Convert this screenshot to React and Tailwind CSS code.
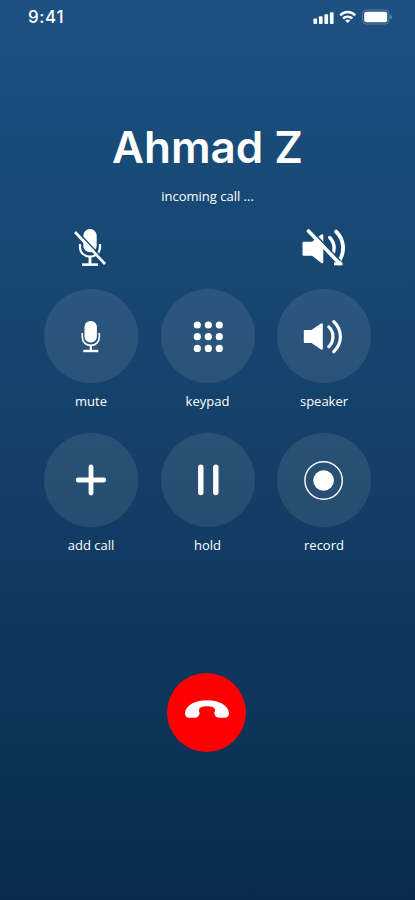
import React from 'react'

const MicIcon = () => (
  <svg className="w-[28px] h-[36px]" viewBox="76.5 318 28 36" fill="none" stroke="white">
    <rect x="84" y="321" width="12.4" height="21.4" rx="5.8" fill="white" stroke="none" />
    <path d="M81.8 333v4c0 5 3.6 8.4 8.5 8.4s8.5-3.4 8.5-8.4v-4" strokeWidth="1.6" />
    <path d="M90.3 345v5.5" strokeWidth="2.2" />
    <path d="M82.8 351h15" strokeWidth="2.4" />
  </svg>
)

const MicOffIcon = () => (
  <svg className="w-[36px] h-[40px]" viewBox="72 228 36 40" fill="none" stroke="white">
    <rect x="83.3" y="229" width="13.4" height="23.3" rx="6.6" fill="white" stroke="none" />
    <path d="M80 244v3c0 6 4.4 9.6 10 9.6s10-3.6 10-9.6v-3" strokeWidth="2.2" />
    <path d="M90 256.5v8" strokeWidth="2.8" />
    <path d="M82 264.6h16" strokeWidth="2.6" />
    <path d="M76.6 230.6l29.8 31.6" stroke="#184a78" strokeWidth="1.4" />
    <path d="M75 232l30 32" strokeWidth="2.7" />
  </svg>
)

const SpeakerIcon = () => (
  <svg className="w-[44px] h-[40px]" viewBox="302.5 316.5 44 40" fill="none" stroke="white">
    <path d="M305.2 330.5h6.8l9.5-6.6q1.8-.8 1.8.8v24.6q0 1.6-1.8.8l-9.5-6.6h-6.8q-.9 0-.9-.9v-11.2q0-.9.9-.9z" fill="white" stroke="none" />
    <path d="M329.3 327.4c5.5 5.2 5.5 14.3 0 19.7" strokeWidth="3.2" strokeLinecap="round" />
    <path d="M334.3 322.2c8.8 8.7 8.8 21.2 0 30" strokeWidth="3.2" strokeLinecap="round" />
  </svg>
)

const SpeakerOffIcon = () => (
  <svg className="w-[46px] h-[40px]" viewBox="300.5 228 46 40" fill="none" stroke="white">
    <path d="M303 241.7h8.5l9.3-7.2q2-1 2 1v26.5q0 2-2 1l-9.3-7.2h-8.5q-1 0-1-1v-12.1q0-1 1-1z" fill="white" stroke="none" />
    <path d="M329.3 237.6c4.8 5.2 5.2 11.8 2.6 17.6" strokeWidth="3.4" strokeLinecap="round" />
    <path d="M335.7 231.6c8 8.2 8.8 19.2 3.6 28.4" strokeWidth="3.8" strokeLinecap="round" />
    <path d="M309.9 229.3l30 31.5" stroke="#184a78" strokeWidth="1.6" />
    <path d="M308 231l31 32.5" strokeWidth="3.6" strokeLinecap="round" />
    <path d="M333.5 263.8h8.5" strokeWidth="3" />
  </svg>
)

const KeypadIcon = () => (
  <svg className="w-8 h-8" viewBox="0 0 32 32" fill="white">
    {[5.3, 17, 28.700].map((cy) =>
      [5.3, 16.3, 27.3].map((cx) => <circle key={`${cx}-${cy}`} cx={cx} cy={cy - 0.3} r="3.6" />)
    )}
  </svg>
)

const PlusIcon = () => (
  <svg className="w-8 h-8" viewBox="0 0 32 32" stroke="white" strokeWidth="4.8" strokeLinecap="round">
    <path d="M16 3v26M3.2 16h25.6" />
  </svg>
)

const PauseIcon = () => (
  <svg className="w-6 h-8" viewBox="0 0 24 32" stroke="white" strokeWidth="5.4" strokeLinecap="round">
    <path d="M4.8 3.2v25.4M19.8 3.2v25.4" />
  </svg>
)

const RecordIcon = () => (
  <svg className="w-10 h-10" viewBox="0 0 40 40">
    <circle cx="19.6" cy="20.5" r="18.7" fill="none" stroke="white" strokeWidth="1.4" />
    <circle cx="19.6" cy="20.5" r="10.3" fill="white" />
  </svg>
)

const actions = [
  { label: 'mute', Icon: MicIcon },
  { label: 'keypad', Icon: KeypadIcon },
  { label: 'speaker', Icon: SpeakerIcon },
  { label: 'add call', Icon: PlusIcon },
  { label: 'hold', Icon: PauseIcon },
  { label: 'record', Icon: RecordIcon },
]

const StatusBar = () => (
  <div className="flex h-[34px] items-center justify-between pl-7 pr-[23px]">
    <span className="font-['Inter',sans-serif] text-[17px] font-medium leading-none tracking-[0.6px]">9:41</span>
    <div className="flex items-center">
      <svg className="w-[22px] h-[14px]" viewBox="313 10 22 14" fill="white">
        <rect x="313.4" y="18.5" width="3.7" height="5.5" rx="1" />
        <rect x="318.9" y="16.3" width="3.7" height="7.7" rx="1" />
        <rect x="324.4" y="14.3" width="3.7" height="9.7" rx="1" />
        <rect x="329.9" y="12.3" width="3.7" height="11.7" rx="1" />
      </svg>
      <svg className="ml-1 w-[18px] h-[14px]" viewBox="339 11 18 14" fill="none" stroke="white" strokeWidth="2.4">
        <path d="M340.2 16.3c4.2-4.3 10.8-4.3 15 0" />
        <path d="M343.1 19.5c2.7-2.5 6.5-2.5 9.2 0" />
        <path d="M347.7 24l-2.5-2.6c1.5-1.2 3.5-1.2 5 0z" fill="white" stroke="none" />
      </svg>
      <svg className="ml-[5px] w-[30px] h-[16px]" viewBox="362 9.5 30 16">
        <rect x="362.5" y="10.5" width="26.5" height="14" rx="4" fill="none" stroke="white" strokeOpacity=".25" />
        <rect x="364.2" y="12.3" width="23" height="10.4" rx="2" fill="white" />
        <path d="M390.3 15.2v4.6c1.8-.8 1.8-3.8 0-4.6z" fill="white" fillOpacity=".4" />
      </svg>
    </div>
  </div>
)

const App = () => {
  return (
    <div className="h-[900px] w-full overflow-hidden bg-linear-to-b from-[#1c5182] via-[#144068] to-[#082b4f] text-white">
      <StatusBar />

      <header className="flex flex-col items-center pt-[87px]">
        <h1 className="h-[52px] whitespace-nowrap font-['Inter',sans-serif] text-[44px] font-semibold leading-[52px]">
          Ahmad Z
        </h1>
        <p className="mt-[13px] h-5 font-['Open_Sans',sans-serif] text-[13px] leading-5">
          incoming call ...
        </p>
      </header>

      <div className="mt-[22px] flex h-10 justify-between pl-[72px] pr-[68px]">
        <MicOffIcon />
        <SpeakerOffIcon />
      </div>

      <div className="mx-auto mt-[21px] grid w-[327px] grid-cols-3 gap-x-[22.5px] gap-y-[22px]">
        {actions.map(({ label, Icon }) => (
          <button key={label} type="button" className="flex h-[122px] flex-col items-center">
            <span className="flex h-[94px] w-[94px] shrink-0 items-center justify-center rounded-full bg-white/[0.09]">
              <Icon />
            </span>
            <span className="mt-2 whitespace-nowrap font-['Open_Sans',sans-serif] text-[13px] leading-5">
              {label}
            </span>
          </button>
        ))}
      </div>

      <button
        type="button"
        aria-label="End call"
        className="ml-[167px] mt-[118px] flex h-[79px] w-[79px] items-center justify-center rounded-full bg-[#ff0000]"
      >
        <svg className="mb-[8px] w-11 h-[18px]" viewBox="90 119 132 54" fill="white">
          <path d="M90 158C93 134 121 120 156 120s63 14 66 38c0 9-4 14-11 14h-20c-8 0-12-6-13-14 4-9 2-14-4-17-10-4-26-4-36 0-6 3-8 8-4 17-1 8-5 14-13 14h-20c-7 0-11-5-11-14z" />
        </svg>
      </button>
    </div>
  )
}

export default App
